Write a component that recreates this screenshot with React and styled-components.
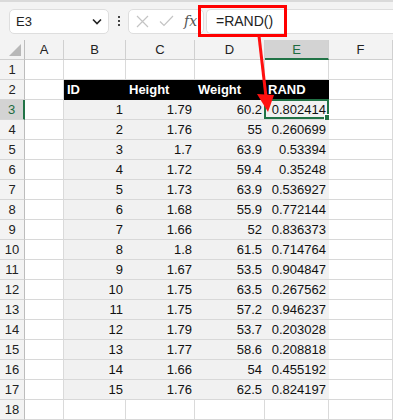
import React from 'react';
import styled, { createGlobalStyle } from 'styled-components';

const GlobalStyle = createGlobalStyle`
  body {
    margin: 0;
    background: #f3f3f3;
    font-family: "Liberation Sans", Arial, sans-serif;
  }
`;

const COLS = [25, 39, 62, 69, 70, 64, 64];
const GREEN = '#217346';

const rows = [
  [1, '1.79', '60.2', '0.802414'],
  [2, '1.76', '55', '0.260699'],
  [3, '1.7', '63.9', '0.53394'],
  [4, '1.72', '59.4', '0.35248'],
  [5, '1.73', '63.9', '0.536927'],
  [6, '1.68', '55.9', '0.772144'],
  [7, '1.66', '52', '0.836373'],
  [8, '1.8', '61.5', '0.714764'],
  [9, '1.67', '53.5', '0.904847'],
  [10, '1.75', '63.5', '0.267562'],
  [11, '1.75', '57.2', '0.946237'],
  [12, '1.79', '53.7', '0.203028'],
  [13, '1.77', '58.6', '0.208818'],
  [14, '1.66', '54', '0.455192'],
  [15, '1.76', '62.5', '0.824197'],
];

const Page = styled.div`
  position: relative;
  width: 393px;
  height: 420px;
  overflow: hidden;
  background: #f3f3f3;
`;

const TopEdge = styled.div`
  height: 2px;
  background: #dadada;
`;

const Toolbar = styled.div`
  position: relative;
  display: flex;
  align-items: center;
  height: 38px;
  padding: 3px 0 3px 9px;
  box-sizing: border-box;
`;

const NameBox = styled.div`
  display: flex;
  align-items: center;
  justify-content: space-between;
  width: 100px;
  height: 25px;
  box-sizing: border-box;
  background: #fff;
  border: 1px solid #dedede;
  border-radius: 5px;
  padding: 0 6px 0 6px;
  font-size: 13px;
  color: #222;
`;

const Dots = styled.div`
  display: flex;
  flex-direction: column;
  gap: 2px;
  margin: 0 8px 0 9px;
  span {
    width: 2px;
    height: 2px;
    background: #444;
  }
`;

const IconBox = styled.div`
  display: flex;
  align-items: center;
  gap: 10px;
  width: 76px;
  height: 25px;
  box-sizing: border-box;
  background: #fff;
  border: 1px solid #dedede;
  border-radius: 5px;
  padding-left: 7px;
`;

const Fx = styled.span`
  font-family: "DejaVu Serif", "Liberation Serif", serif;
  font-style: italic;
  font-size: 14px;
  color: #555;
`;

const FormulaInput = styled.div`
  display: flex;
  align-items: center;
  flex: 1;
  height: 25px;
  margin-left: 2px;
  box-sizing: border-box;
  background: #fff;
  border: 1px solid #dedede;
  border-right: none;
  border-radius: 5px 0 0 5px;
  padding-left: 9px;
  font-size: 14px;
  color: #222;
`;

const Highlight = styled.div`
  position: absolute;
  left: 198px;
  top: 3px;
  width: 89px;
  height: 32px;
  box-sizing: border-box;
  border: 3px solid #ff0000;
`;

const Grid = styled.div`
  display: grid;
  grid-template-columns: ${COLS.map((c) => c + 'px').join(' ')};
  grid-auto-rows: 20px;
  background: #fff;
`;

const ColHead = styled.div`
  display: flex;
  align-items: center;
  justify-content: center;
  font-size: 13px;
  color: ${(p) => (p.$active ? '#1d6b3f' : '#222')};
  background: ${(p) => (p.$active ? '#d3d3d3' : '#f3f3f3')};
  border-right: 1px solid #d0d0d0;
  border-bottom: ${(p) => (p.$active ? `2px solid ${GREEN}` : '1px solid #cfcfcf')};
  box-sizing: border-box;
`;

const Corner = styled.div`
  position: relative;
  background: #f3f3f3;
  border-right: 1px solid #bdbdbd;
  border-bottom: 1px solid #cfcfcf;
  box-sizing: border-box;
  &::after {
    content: '';
    position: absolute;
    right: 3px;
    bottom: 3px;
    border-style: solid;
    border-width: 0 0 12px 12px;
    border-color: transparent transparent #b8b8b8 transparent;
  }
`;

const RowHead = styled.div`
  display: flex;
  align-items: center;
  justify-content: center;
  font-size: 13px;
  color: ${(p) => (p.$active ? '#1d6b3f' : '#222')};
  background: ${(p) => (p.$active ? '#d3d3d3' : '#f3f3f3')};
  border-right: ${(p) => (p.$active ? `2px solid ${GREEN}` : '1px solid #bdbdbd')};
  border-bottom: 1px solid #d6d6d6;
  box-sizing: border-box;
`;

const Cell = styled.div`
  position: relative;
  display: flex;
  align-items: center;
  justify-content: ${(p) => (p.$left ? 'flex-start' : 'flex-end')};
  padding: 0 3px;
  font-size: 13px;
  font-weight: ${(p) => (p.$bold ? 700 : 400)};
  color: ${(p) => (p.$kind === 'head' ? '#fff' : '#111')};
  background: ${(p) =>
    p.$kind === 'head' ? '#000' : p.$kind === 'data' ? '#f1f1f1' : '#fff'};
  border-right: ${(p) => (p.$kind ? 'none' : '1px solid #dadada')};
  border-bottom: 1px solid ${(p) => (p.$kind === 'head' ? '#000' : '#d8d8d8')};
  box-sizing: border-box;
  white-space: nowrap;
`;

const Selection = styled.div`
  position: absolute;
  inset: -1px 0 0 -1px;
  border: 2px solid ${GREEN};
  pointer-events: none;
  &::after {
    content: '';
    position: absolute;
    right: -4px;
    bottom: -4px;
    width: 5px;
    height: 5px;
    background: ${GREEN};
    border: 1px solid #fff;
  }
`;

const Arrow = styled.svg`
  position: absolute;
  left: 0;
  top: 0;
  pointer-events: none;
`;

const letters = ['A', 'B', 'C', 'D', 'E', 'F'];

function DataRow({ r, cells, kind, bold, left }) {
  return (
    <>
      <RowHead $active={r === 3}>{r}</RowHead>
      <Cell />
      {cells.map((v, i) => (
        <Cell key={i} $kind={kind} $bold={bold} $left={left}>
          {v}
          {r === 3 && i === 3 && <Selection />}
        </Cell>
      ))}
      <Cell />
    </>
  );
}

function EmptyRow({ r }) {
  return (
    <>
      <RowHead>{r}</RowHead>
      {letters.map((l) => (
        <Cell key={l} />
      ))}
    </>
  );
}

export default function App() {
  return (
    <Page>
      <GlobalStyle />
      <TopEdge />
      <Toolbar>
        <NameBox>
          E3
          <svg width="10" height="7" viewBox="0 0 10 7">
            <path d="M1 1.5 L5 5.5 L9 1.5" fill="none" stroke="#222" strokeWidth="1.6" />
          </svg>
        </NameBox>
        <Dots>
          <span />
          <span />
          <span />
        </Dots>
        <IconBox>
          <svg width="13" height="13" viewBox="0 0 13 13">
            <path d="M1 1 L12 12 M12 1 L1 12" stroke="#c4c4c4" strokeWidth="1.2" />
          </svg>
          <svg width="15" height="12" viewBox="0 0 15 12">
            <path d="M1 6.5 L5 10.5 L14 1" fill="none" stroke="#c4c4c4" strokeWidth="1.2" />
          </svg>
          <Fx>fx</Fx>
        </IconBox>
        <FormulaInput>=RAND()</FormulaInput>
        <Highlight />
      </Toolbar>
      <Grid>
        <Corner />
        {letters.map((l) => (
          <ColHead key={l} $active={l === 'E'}>
            {l}
          </ColHead>
        ))}
        <EmptyRow r={1} />
        <DataRow r={2} cells={['ID', 'Height', 'Weight', 'RAND']} kind="head" bold left />
        {rows.map((row, i) => (
          <DataRow key={i} r={i + 3} cells={row} kind="data" />
        ))}
        <EmptyRow r={18} />
      </Grid>
      <Arrow width="393" height="420">
        <line x1="259" y1="36" x2="266" y2="97" stroke="#ff1010" strokeWidth="3" />
        <polygon points="257,94 274,95 268,112" fill="#ff1010" />
      </Arrow>
    </Page>
  );
}
